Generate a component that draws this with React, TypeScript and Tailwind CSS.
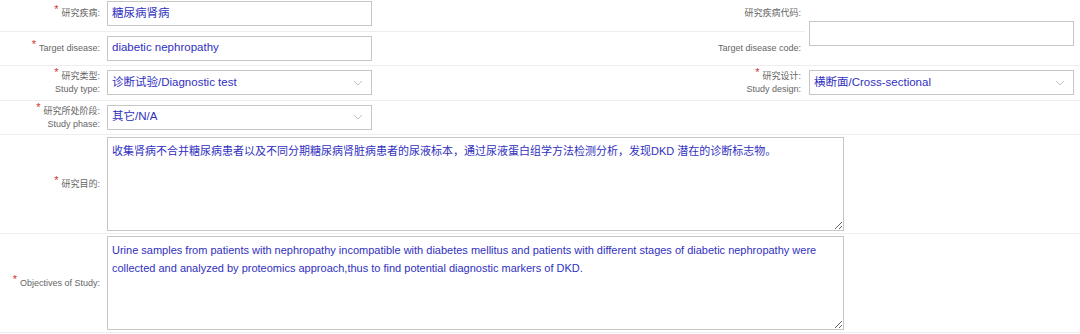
import React from "react";

const font = { fontFamily: '"Liberation Sans", Arial, "Noto Sans CJK SC", sans-serif' };

function Star() {
  return <span className="relative -top-[3px] mr-[3px] text-[11px] text-[#d0332f]">*</span>;
}

function Label({ zh, en, required }: { zh?: string; en?: string; required?: boolean }) {
  return (
    <div className="text-right text-[9px] leading-[13px] text-[#666666]">
      {zh && (
        <div>
          {required && <Star />}
          {zh}
        </div>
      )}
      {en && (
        <div>
          {!zh && required && <Star />}
          {en}
        </div>
      )}
    </div>
  );
}

function TextBox({ value }: { value?: string }) {
  return (
    <div className="flex h-[25px] w-[265px] items-center border border-[#c6c6c6] bg-white px-[4px] text-[11.5px] text-[#3030c0]">
      {value}
    </div>
  );
}

function SelectBox({ value }: { value: string }) {
  return (
    <div className="flex h-[25px] w-[265px] items-center justify-between border border-[#c6c6c6] bg-white pl-[4px] pr-[8px] text-[11.5px] text-[#3030c0]">
      <span>{value}</span>
      <svg width="10" height="6" viewBox="0 0 10 6">
        <polyline points="1,1 5,5 9,1" fill="none" stroke="#c4c4c4" strokeWidth="1" />
      </svg>
    </div>
  );
}

function Area({ value }: { value?: string }) {
  return (
    <textarea
      readOnly
      defaultValue={value}
      className="block h-[94px] w-[737px] resize border border-[#c6c6c6] bg-white px-[4px] py-[4px] text-[11px] leading-[18px] text-[#3030c0] outline-none"
      style={font}
    />
  );
}

const cell = "border-b border-[#eeeeee] p-0 align-middle";

export default function App() {
  return (
    <div className="w-[1080px] overflow-hidden bg-white" style={font}>
      <table className="-mt-[4px] w-full table-fixed border-collapse">
        <colgroup>
          <col className="w-[104px]" />
          <col className="w-[276px]" />
          <col className="w-[425px]" />
          <col />
        </colgroup>
        <tbody>
          <tr className="h-[35px]">
            <td className={`${cell} pr-[4px]`}>
              <Label zh="研究疾病:" required />
            </td>
            <td className={`${cell} pl-[3px]`}>
              <TextBox value="糖尿病肾病" />
            </td>
            <td className={`${cell} pr-[4px]`}>
              <Label zh="研究疾病代码:" />
            </td>
            <td rowSpan={2} className={`${cell} pl-[4px] pt-[6px]`}>
              <TextBox />
            </td>
          </tr>
          <tr className="h-[34px]">
            <td className={`${cell} pr-[4px]`}>
              <Label en="Target disease:" required />
            </td>
            <td className={`${cell} pl-[3px]`}>
              <TextBox value="diabetic nephropathy" />
            </td>
            <td className={`${cell} pr-[4px]`}>
              <Label en="Target disease code:" />
            </td>
          </tr>
          <tr className="h-[35px]">
            <td className={`${cell} pr-[4px]`}>
              <Label zh="研究类型:" en="Study type:" required />
            </td>
            <td className={`${cell} pl-[3px]`}>
              <SelectBox value="诊断试验/Diagnostic test" />
            </td>
            <td className={`${cell} pr-[4px]`}>
              <Label zh="研究设计:" en="Study design:" required />
            </td>
            <td className={`${cell} pl-[4px]`}>
              <SelectBox value="横断面/Cross-sectional" />
            </td>
          </tr>
          <tr className="h-[34px]">
            <td className={`${cell} pr-[4px]`}>
              <Label zh="研究所处阶段:" en="Study phase:" required />
            </td>
            <td className={`${cell} pl-[3px]`}>
              <SelectBox value="其它/N/A" />
            </td>
            <td className={cell} />
            <td className={cell} />
          </tr>
          <tr>
            <td className={`${cell} pr-[4px]`}>
              <Label zh="研究目的:" required />
            </td>
            <td colSpan={3} className={`${cell} py-[2px] pl-[3px]`}>
              <Area value="收集肾病不合并糖尿病患者以及不同分期糖尿病肾脏病患者的尿液标本，通过尿液蛋白组学方法检测分析，发现DKD 潜在的诊断标志物。" />
            </td>
          </tr>
          <tr>
            <td className={`${cell} pr-[4px]`}>
              <Label en="Objectives of Study:" required />
            </td>
            <td colSpan={3} className={`${cell} py-[2px] pl-[3px]`}>
              <Area value="Urine samples from patients with nephropathy incompatible with diabetes mellitus and patients with different stages of diabetic nephropathy were collected and analyzed by proteomics approach,thus to find potential diagnostic markers of DKD." />
            </td>
          </tr>
          <tr>
            <td className={`${cell} pr-[4px]`} />
            <td colSpan={3} className={`${cell} py-[1px] pl-[3px]`}>
              <Area />
            </td>
          </tr>
        </tbody>
      </table>
    </div>
  );
}
